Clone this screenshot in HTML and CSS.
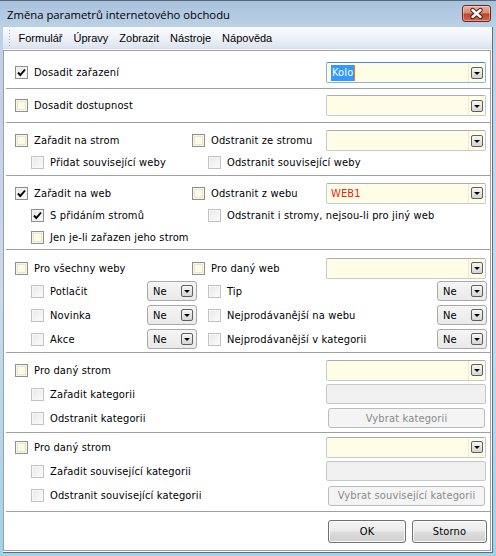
FILE: index.html
```html
<!DOCTYPE html>
<html lang="cs">
<head>
<meta charset="utf-8">
<title>Změna parametrů internetového obchodu</title>
<link rel="stylesheet" href="styles.css">
</head>
<body>
<div class="window">
  <div class="titlebar">
    <span class="title">Změna parametrů internetového obchodu</span>
    <span class="close"><svg width="29" height="17" viewBox="0 0 29 17"><path d="M10.5 5 L18.5 12 M18.5 5 L10.5 12" stroke="#4a1d16" stroke-width="4.4" stroke-linecap="round"/><path d="M10.5 5 L18.5 12 M18.5 5 L10.5 12" stroke="#ffffff" stroke-width="2.4" stroke-linecap="round"/></svg></span>
  </div>
  <div class="client">
    <div class="menubar">
      <span class="grip"></span>
      <span class="menu">Formulář</span>
      <span class="menu">Úpravy</span>
      <span class="menu">Zobrazit</span>
      <span class="menu">Nástroje</span>
      <span class="menu">Nápověda</span>
    </div>
    <div class="panel">
      <div class="sec s1">
        <div class="row r21">
          <label class="chk w311"><span class="cb on"><svg width="9" height="9" viewBox="0 0 9 9"><path d="M1 4.5 L3.3 7 L8 1.5" fill="none" stroke="#000" stroke-width="1.9"/></svg></span>Dosadit zařazení</label>
          <div class="combo focus"><span class="val"><span class="sel">Kolo</span></span><span class="dd"><span class="ddb"></span></span></div>
        </div>
      </div>
      <div class="sep"></div>
      <div class="sec s2">
        <div class="row r21">
          <label class="chk w311"><span class="cb"></span>Dosadit dostupnost</label>
          <div class="combo"><span class="val"></span><span class="dd"><span class="ddb"></span></span></div>
        </div>
      </div>
      <div class="sep"></div>
      <div class="sec s3">
        <div class="row r21">
          <label class="chk c1"><span class="cb"></span>Zařadit na strom</label>
          <label class="chk c2"><span class="cb"></span>Odstranit ze stromu</label>
          <div class="combo"><span class="val"></span><span class="dd"><span class="ddb"></span></span></div>
        </div>
        <div class="row r22">
          <label class="chk c1 sub"><span class="cb dis"></span>Přidat související weby</label>
          <label class="chk c2 sub"><span class="cb dis"></span>Odstranit související weby</label>
        </div>
      </div>
      <div class="sep"></div>
      <div class="sec s4">
        <div class="row r22">
          <label class="chk c1"><span class="cb on"><svg width="9" height="9" viewBox="0 0 9 9"><path d="M1 4.5 L3.3 7 L8 1.5" fill="none" stroke="#000" stroke-width="1.9"/></svg></span>Zařadit na web</label>
          <label class="chk c2"><span class="cb"></span>Odstranit z webu</label>
          <div class="combo"><span class="val red">WEB1</span><span class="dd"><span class="ddb"></span></span></div>
        </div>
        <div class="row r22">
          <label class="chk c1 sub"><span class="cb on"><svg width="9" height="9" viewBox="0 0 9 9"><path d="M1 4.5 L3.3 7 L8 1.5" fill="none" stroke="#000" stroke-width="1.9"/></svg></span>S přidáním stromů</label>
          <label class="chk c2 sub"><span class="cb dis"></span>Odstranit i stromy, nejsou-li pro jiný web</label>
        </div>
        <div class="row r22">
          <label class="chk c1 sub"><span class="cb"></span>Jen je-li zařazen jeho strom</label>
        </div>
      </div>
      <div class="sep"></div>
      <div class="sec s5">
        <div class="row r22">
          <label class="chk c1"><span class="cb"></span>Pro všechny weby</label>
          <label class="chk c2"><span class="cb"></span>Pro daný web</label>
          <div class="combo"><span class="val"></span><span class="dd"><span class="ddb"></span></span></div>
        </div>
        <div class="row r24">
          <label class="chk lab1"><span class="cb dis"></span>Potlačit</label>
          <div class="mini"><span>Ne</span><span class="ddb"></span></div>
          <label class="chk lab2"><span class="cb dis"></span>Tip</label>
          <div class="mini"><span>Ne</span><span class="ddb"></span></div>
        </div>
        <div class="row r24">
          <label class="chk lab1"><span class="cb dis"></span>Novinka</label>
          <div class="mini"><span>Ne</span><span class="ddb"></span></div>
          <label class="chk lab2"><span class="cb dis"></span>Nejprodávanější na webu</label>
          <div class="mini"><span>Ne</span><span class="ddb"></span></div>
        </div>
        <div class="row r24">
          <label class="chk lab1"><span class="cb dis"></span>Akce</label>
          <div class="mini"><span>Ne</span><span class="ddb"></span></div>
          <label class="chk lab2"><span class="cb dis"></span>Nejprodávanější v kategorii</label>
          <div class="mini"><span>Ne</span><span class="ddb"></span></div>
        </div>
      </div>
      <div class="sep"></div>
      <div class="sec s6">
        <div class="row r24">
          <label class="chk w311"><span class="cb"></span>Pro daný strom</label>
          <div class="combo"><span class="val"></span><span class="dd"><span class="ddb"></span></span></div>
        </div>
        <div class="row r24">
          <label class="chk w311 sub"><span class="cb dis"></span>Zařadit kategorii</label>
          <div class="field"></div>
        </div>
        <div class="row r24">
          <label class="chk w311 sub"><span class="cb dis"></span>Odstranit kategorii</label>
          <button class="dbtn" disabled>Vybrat kategorii</button>
        </div>
      </div>
      <div class="sep"></div>
      <div class="sec s7">
        <div class="row r24">
          <label class="chk w311"><span class="cb"></span>Pro daný strom</label>
          <div class="combo"><span class="val"></span><span class="dd"><span class="ddb"></span></span></div>
        </div>
        <div class="row r24">
          <label class="chk w311 sub"><span class="cb dis"></span>Zařadit související kategorii</label>
          <div class="field"></div>
        </div>
        <div class="row r25">
          <label class="chk w311 sub"><span class="cb dis"></span>Odstranit související kategorii</label>
          <button class="dbtn" disabled>Vybrat související kategorii</button>
        </div>
      </div>
      <div class="sep"></div>
      <div class="sec s8">
        <button class="btn ok">OK</button>
        <button class="btn">Storno</button>
      </div>
    </div>
  </div>
</div>
</body>
</html>
```

FILE: styles.css
```css
html, body {
  margin: 0;
  padding: 0;
}
body {
  width: 496px;
  height: 556px;
  overflow: hidden;
  font-family: "DejaVu Sans Condensed", "DejaVu Sans", sans-serif;
  font-size: 11px;
  letter-spacing: 0.15px;
  color: #000;
}
.window {
  width: 496px;
  height: 556px;
  box-sizing: border-box;
  display: flex;
  flex-direction: column;
  background: linear-gradient(180deg, #a9c2dc 0px, #bcd1e7 27px, #c6dbee 300px, #9fd3ea 556px);
  border-top: 1px solid #55687c;
}
.titlebar {
  height: 26px;
  display: flex;
  align-items: center;
  justify-content: space-between;
  padding: 0 5px 0 7px;
  flex: none;
}
.title {
  font-family: "Open Sans", "Liberation Sans", sans-serif;
  font-size: 11.3px;
  letter-spacing: 0;
  color: #000;
}
.close {
  width: 29px;
  height: 17px;
  box-sizing: border-box;
  border: 1px solid #6a2a20;
  border-radius: 3px;
  background: linear-gradient(180deg, #e9b1a3 0%, #d98a75 45%, #c2432c 55%, #d0674f 100%);
  display: flex;
  align-items: center;
  justify-content: center;
  margin-top: -1px;
  box-shadow: inset 0 0 0 1px rgba(255,255,255,0.35);
}
.close svg {
  display: block;
  margin: -1px;
}
.client {
  flex: 1;
  margin: 0 3px 3px 3px;
  border-right: 1px solid #5b6d80;
  border-bottom: 1px solid #5b6d80;
  background: #fff;
  display: flex;
  flex-direction: column;
}
.menubar {
  height: 22px;
  flex: none;
  display: flex;
  align-items: center;
  padding-left: 5px;
  background: linear-gradient(180deg, #fbfcfe 0%, #eef2f8 50%, #dde3ef 100%);
  border-bottom: 1px solid #d5dbe7;
  box-sizing: border-box;
}
.grip {
  width: 3px;
  height: 17px;
  margin-right: 7.5px;
  background: radial-gradient(circle, #a2a9b6 0.8px, transparent 1px) 0 0 / 3px 3px;
}
.menu {
  font-family: "Liberation Sans", Arial, sans-serif;
  letter-spacing: 0;
  padding: 0 5.5px 0 0;
  margin-right: 5.5px;
  line-height: 20px;
}
.panel {
  flex: 1;
  margin: 1px 1px 1px 0;
  border: 1px solid #a0a0a0;
  display: flex;
  flex-direction: column;
  background: #fff;
}
.sep {
  height: 1px;
  background: #a0a0a0;
  margin-left: 2px;
  flex: none;
}
.sec {
  padding-left: 11px;
  padding-right: 4px;
  flex: none;
}
.s1 { padding-top: 11px; padding-bottom: 5px; }
.s2 { padding-top: 6px; padding-bottom: 6px; }
.s3 { padding-top: 7px; padding-bottom: 2px; }
.s4 { padding-top: 6px; padding-bottom: 1px; }
.s5 { padding-top: 7px; padding-bottom: 1px; }
.s6 { padding-top: 5px; padding-bottom: 2px; }
.s7 { padding-top: 2px; padding-bottom: 3px; }
.s8 {
  flex: 1;
  display: flex;
  justify-content: flex-end;
  align-items: flex-start;
  padding-top: 8px;
  padding-right: 3px;
  gap: 6px;
}
.row {
  display: flex;
  align-items: center;
  white-space: nowrap;
}
.r21 { height: 21px; }
.r22 { height: 22px; }
.r24 { height: 24px; }
.r25 { height: 25px; }
.chk {
  display: flex;
  align-items: center;
  gap: 6px;
  box-sizing: border-box;
  flex: none;
}
.c1 { width: 177px; }
.c2 { width: 134px; }
.w311 { width: 311px; }
.sub { padding-left: 16px; }
.lab1 { width: 132px; padding-left: 16px; }
.lab2 { width: 229px; margin-left: 11px; }
.cb {
  width: 13px;
  height: 13px;
  box-sizing: border-box;
  flex: none;
  border: 1px solid #8e8f8f;
  background: #fcfce0;
  box-shadow: inset 0 0 0 1px #f6f6ee, inset 0 0 0 2px #e6e6d2;
  display: flex;
  align-items: center;
  justify-content: center;
}
.cb.on {
  background: linear-gradient(135deg, #e6e6e6, #fbfbfb);
  box-shadow: inset 0 0 0 1px #f4f4f4;
}
.cb.dis {
  border-color: #c2c2c2;
  background: linear-gradient(135deg, #e9e9e9, #fbfbfb);
  box-shadow: inset 0 0 0 1px #f7f7f7;
}
.cb svg { display: block; }
.combo {
  width: 160px;
  height: 21px;
  box-sizing: border-box;
  border: 1px solid #c6cad0;
  border-top-color: #abadb3;
  border-radius: 2px;
  background: #fefee6;
  display: flex;
  align-items: center;
  flex: none;
}
.combo.focus {
  border-color: #8cb3da;
  border-top-color: #4f88bf;
}
.val {
  flex: 1;
  padding-left: 4px;
  display: flex;
  align-items: center;
}
.red { color: #ee1c24; }
.sel {
  background: #3399ff;
  color: #fff;
  padding: 1px 1px 2px 1px;
  border-right: 1px solid #e87a1e;
}
.dd {
  width: 16px;
  height: 100%;
  border-left: 1px solid #ebebd5;
  display: flex;
  align-items: center;
  justify-content: center;
}
.ddb {
  width: 12px;
  height: 12px;
  box-sizing: border-box;
  border: 1px solid #5e5e5e;
  border-radius: 2px;
  background: linear-gradient(180deg, #f6f6f6, #d4d4d4);
  display: flex;
  align-items: center;
  justify-content: center;
  flex: none;
}
.ddb::after {
  content: "";
  width: 0;
  height: 0;
  border-left: 3px solid transparent;
  border-right: 3px solid transparent;
  border-top: 3px solid #000;
  margin-top: 1px;
}
.mini {
  width: 50px;
  height: 20px;
  box-sizing: border-box;
  border: 1px solid #a9a9a9;
  border-radius: 3px;
  background: linear-gradient(180deg, #f5f5f5, #e9e9e9);
  display: flex;
  align-items: center;
  justify-content: space-between;
  padding: 0 3px 0 5px;
  flex: none;
}
.field {
  width: 160px;
  height: 20px;
  box-sizing: border-box;
  border: 1px solid #c7c7c7;
  border-radius: 2px;
  background: #f0f0f0;
  flex: none;
}
.dbtn {
  width: 157px;
  height: 20px;
  margin-left: 2px;
  box-sizing: border-box;
  border: 1px solid #b8bcc0;
  border-radius: 3px;
  background: #f4f4f4;
  color: #8a8a8a;
  font: inherit;
  letter-spacing: inherit;
  padding: 0;
  flex: none;
}
.btn {
  width: 75px;
  height: 23px;
  box-sizing: border-box;
  border: 1px solid #707070;
  border-radius: 3px;
  background: linear-gradient(180deg, #f3f3f3 0%, #ebebeb 48%, #dddddd 52%, #cfcfcf 100%);
  box-shadow: inset 0 0 0 1px #fbfbfb;
  font: inherit;
  letter-spacing: inherit;
  color: #000;
  padding: 0;
}
.btn.ok { width: 78px; }
```
